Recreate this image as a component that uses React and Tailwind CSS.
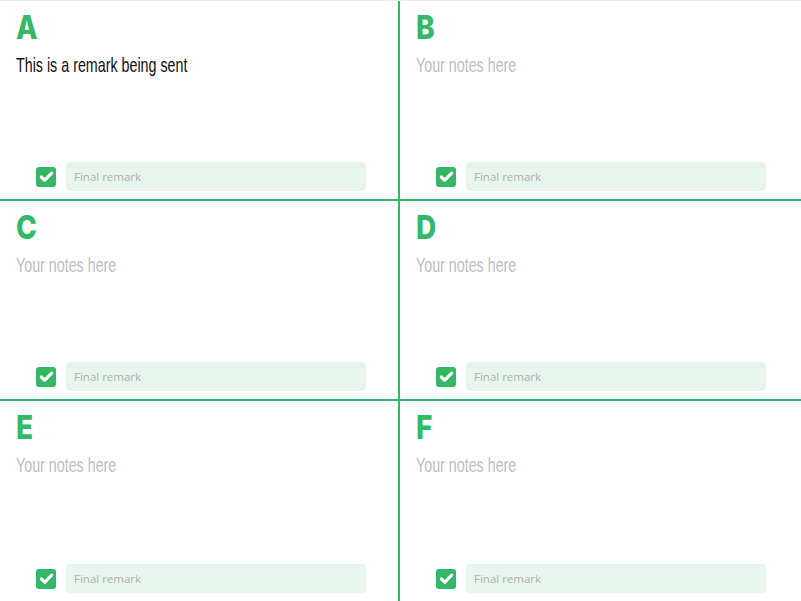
import React from 'react';

const cells = [
  { letter: 'A', note: 'This is a remark being sent' },
  { letter: 'B', note: '' },
  { letter: 'C', note: '' },
  { letter: 'D', note: '' },
  { letter: 'E', note: '' },
  { letter: 'F', note: '' },
];

const CheckBox = () => (
  <div className="w-5 h-5 rounded-[3px] bg-[#34b865] flex items-center justify-center shrink-0">
    <svg viewBox="0 0 16 16" className="w-[15px] h-[15px]">
      <path d="M2.5 8.5 L6.2 12 L13.5 4.5" fill="none" stroke="#fff" strokeWidth="3.4" strokeLinecap="round" strokeLinejoin="round" />
    </svg>
  </div>
);

const Cell = ({ letter, note, index }) => {
  const left = index % 2 === 0;
  const lastRow = index >= 4;
  return (
    <div
      className={`h-[200px] flex flex-col px-4 ${left ? 'border-r-2 border-[#34b865]' : ''} ${lastRow ? '' : 'border-b-2 border-[#34b865]'}`}
    >
      <div className="pt-[6px] h-[44px] text-[33px] leading-[40px] font-extrabold text-[#34b865] font-['Inter',sans-serif]">
        <span className="inline-block origin-left scale-x-[0.85]">{letter}</span>
      </div>
      <div className="flex-1 pt-[6px]">
        {/* narrow face is not installed, so squeeze the regular one */}
        <span
          className={`inline-block whitespace-nowrap origin-left scale-x-[0.68] text-[21px] leading-[28px] font-['Liberation_Sans',sans-serif] ${note ? 'text-[#111]' : 'text-[#bdbdbd]'}`}
        >
          {note || 'Your notes here'}
        </span>
      </div>
      <div className="flex items-center gap-[10px] pl-5 mb-[8px]">
        <CheckBox />
        <input
          placeholder="Final remark"
          className="w-[300px] h-[29px] rounded-[4px] bg-[#e8f5ec] px-2 text-[11.5px] outline-none placeholder:text-[#b0b0b0] font-['Open_Sans',sans-serif]"
        />
      </div>
    </div>
  );
};

export default function App() {
  return (
    <div className="w-[801px] h-[601px] bg-white border-t border-[#eeeeee] grid grid-cols-[400px_401px] overflow-hidden">
      {cells.map((c, i) => (
        <Cell key={c.letter} {...c} index={i} />
      ))}
    </div>
  );
}
